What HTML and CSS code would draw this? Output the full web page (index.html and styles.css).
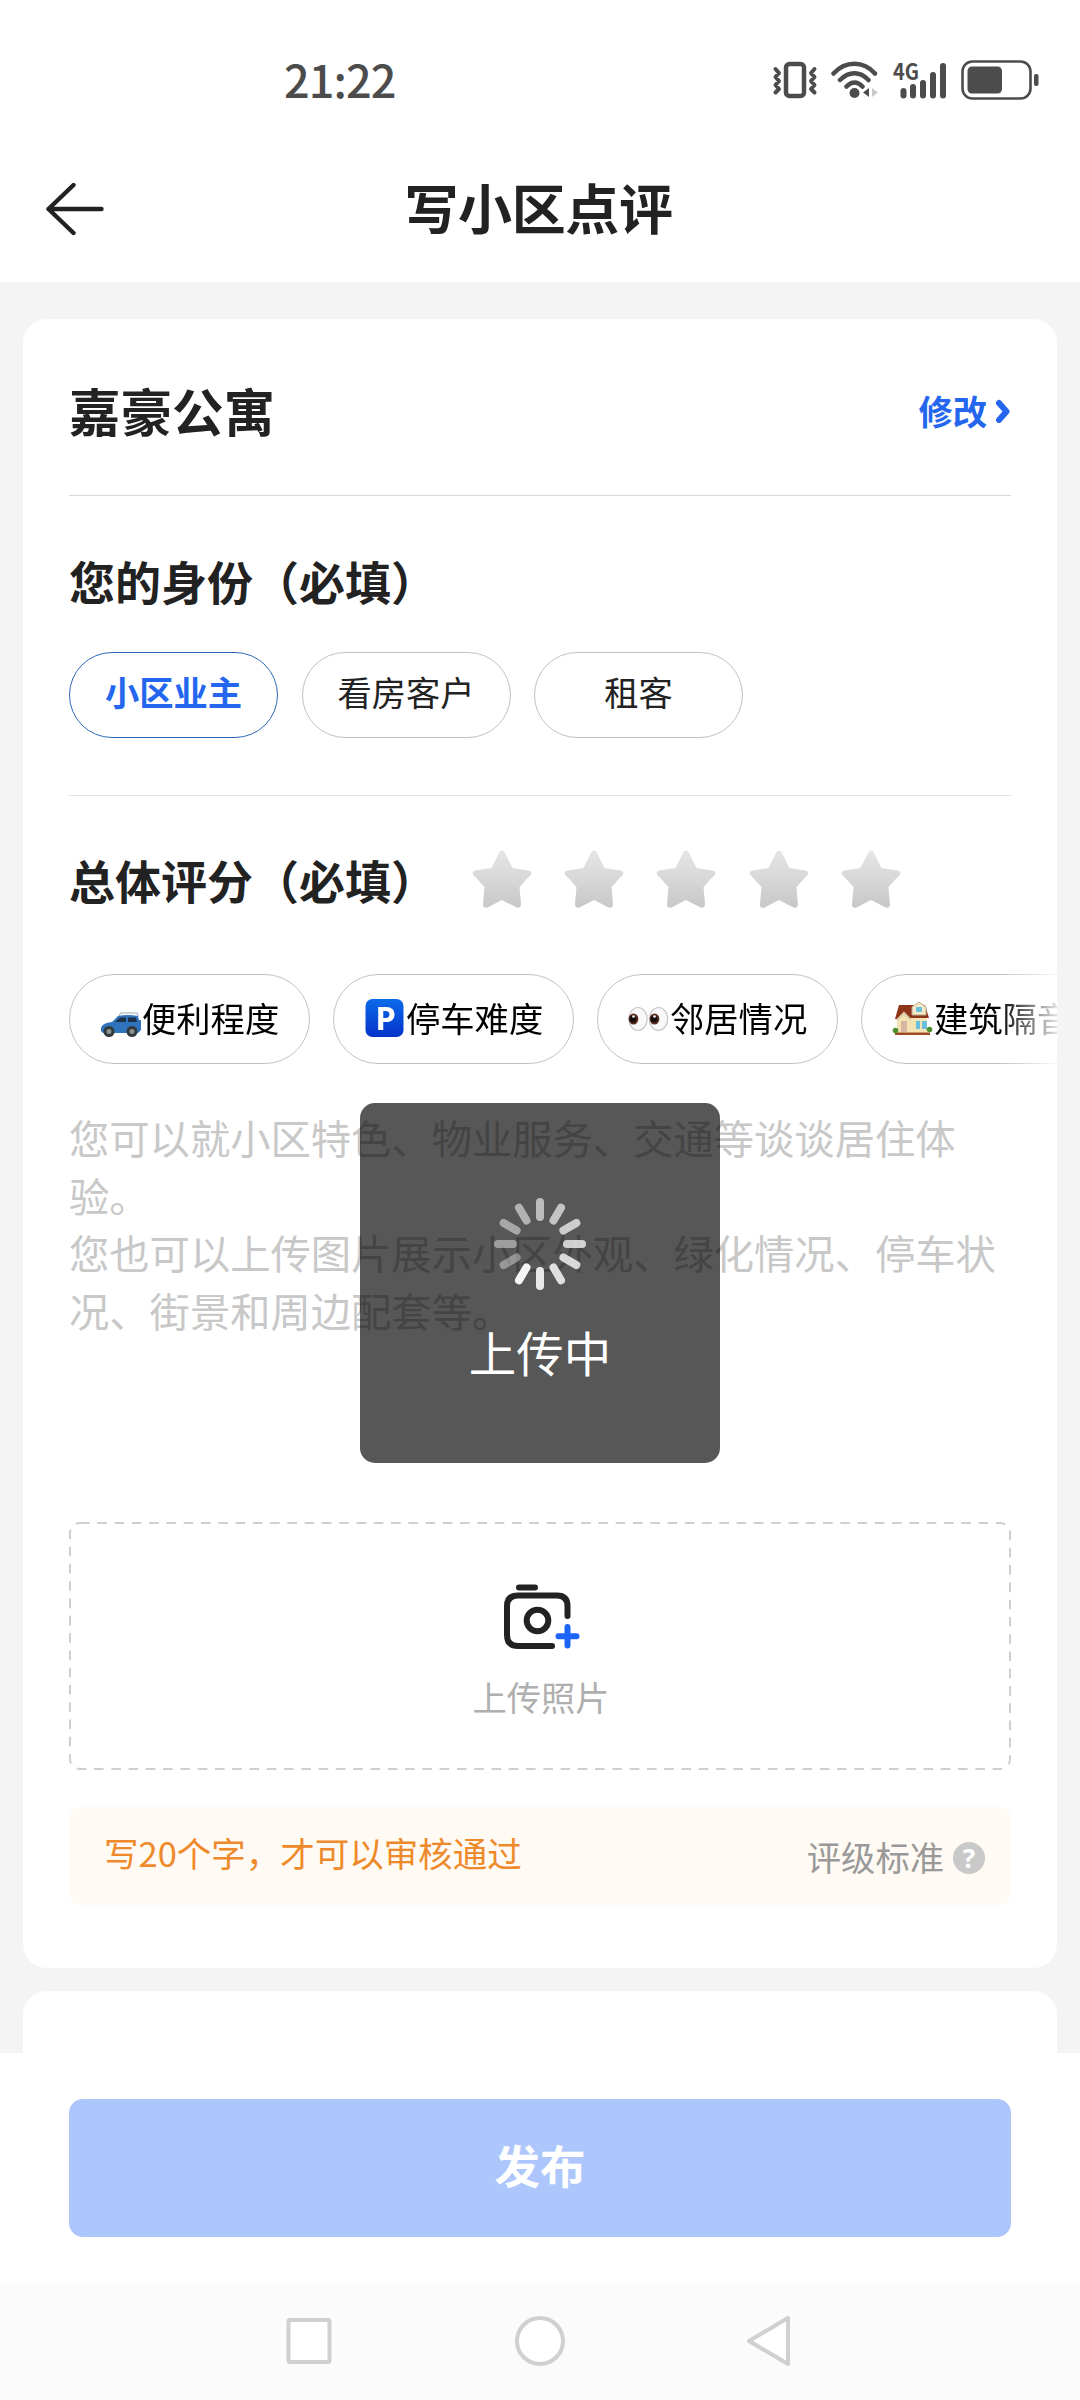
FILE: index.html
```html
<!DOCTYPE html>
<html lang="zh-CN">
<head>
<meta charset="utf-8">
<title>写小区点评</title>
<link rel="stylesheet" href="styles.css">
</head>
<body>
<div class="screen">
  <div class="status">
    <span class="time">21:22</span>
    <div class="status-icons">
      <svg class="vibrate" width="46" height="38" viewBox="0 0 46 38" fill="none" stroke="#4c4c4c" stroke-linecap="round" stroke-linejoin="round">
        <rect x="14" y="3" width="18" height="32" rx="3.500" stroke-width="4.500"/>
        <path d="M3.500 8l3.500 4-3.500 4 3.500 4-3.500 4 3.500 4-3.500 3.500M42.500 8l-3.500 4 3.500 4-3.500 4 3.500 4-3.500 4 3.500 3.500" stroke-width="4"/>
      </svg>
      <svg class="wifi" width="48" height="38" viewBox="0 0 48 38" fill="none" stroke="#4c4c4c" stroke-width="4.500" stroke-linecap="round">
        <path d="M2.500 12.500C14.500 -0.500 32.500 -0.500 44 12.500M9 19C18 10 29 10 37.500 19M15.500 25.500C20.500 20 26.500 20 31.500 25.500"/>
        <circle cx="23.500" cy="32" r="5" fill="#4c4c4c" stroke="none"/>
        <path d="M38 27v9l-6-4.500z" fill="#4c4c4c" stroke="none"/>
        <path d="M41 27v9l6-4.500z" fill="#c9c9c9" stroke="none"/>
      </svg>
      <svg class="signal" width="56" height="38" viewBox="0 0 56 38">
        <text x="1" y="18.500" class="net" textLength="26" lengthAdjust="spacingAndGlyphs">4G</text>
        <g stroke="#4c4c4c" stroke-width="6" stroke-linecap="round">
          <path d="M11.500 30v4.500M21 26v8.500M31 22v12.500M41 14v20.500M51 5v29.500"/>
        </g>
      </svg>
      <svg class="battery" width="79" height="40" viewBox="0 0 79 40">
        <rect x="1.500" y="1.500" width="68" height="37" rx="10" fill="none" stroke="#4c4c4c" stroke-width="2.600"/>
        <rect x="6.500" y="6.500" width="34.500" height="27" rx="4.500" fill="#4c4c4c"/>
        <rect x="73" y="14" width="4.500" height="12" rx="2" fill="#4c4c4c"/>
      </svg>
    </div>
  </div>

  <header class="header">
    <svg class="back" width="60" height="54" viewBox="0 0 60 54" fill="none" stroke="#222" stroke-width="4.400" stroke-linecap="round" stroke-linejoin="round">
      <path d="M29.500 3L4.500 27l25 24M4.500 27H57.500"/>
    </svg>
    <h1 class="title">写小区点评</h1>
  </header>

  <main class="content">
    <section class="card review">
      <div class="estate">
        <h2 class="estate-name">嘉豪公寓</h2>
        <a class="edit">修改
          <svg width="16" height="26" viewBox="0 0 16 26" fill="none" stroke="#2467ee" stroke-width="6" stroke-linecap="round" stroke-linejoin="round"><path d="M4 6l7.500 8.500-7.500 8.500"/></svg>
        </a>
      </div>

      <div class="identity">
        <h3 class="label">您的身份（必填）</h3>
        <div class="roles">
          <span class="role active">小区业主</span>
          <span class="role">看房客户</span>
          <span class="role">租客</span>
        </div>
      </div>

      <div class="rating">
        <h3 class="label">总体评分（必填）</h3>
        <div class="stars">
          <svg class="star" viewBox="0 0 60 58"><defs><linearGradient id="silver" x1="0" y1="0" x2="0" y2="1"><stop offset="0" stop-color="#e6e6e6"/><stop offset="1" stop-color="#c8c8c8"/></linearGradient><path id="star" d="M27.500 2Q30 -1 32.500 2L40.500 18L56.500 20.500Q61 22 58.500 25L47.500 37L49 54Q48.500 59 44.500 57.500L30 50L15.500 57.500Q11 59 11 54L12.500 37L1.500 25Q-1 22 3.500 20.500L19.500 18Z"/></defs><use href="#star" fill="url(#silver)"/></svg>
          <svg class="star" viewBox="0 0 60 58"><use href="#star" fill="url(#silver)"/></svg>
          <svg class="star" viewBox="0 0 60 58"><use href="#star" fill="url(#silver)"/></svg>
          <svg class="star" viewBox="0 0 60 58"><use href="#star" fill="url(#silver)"/></svg>
          <svg class="star" viewBox="0 0 60 58"><use href="#star" fill="url(#silver)"/></svg>
        </div>
      </div>

      <div class="topics">
        <span class="topic">
          <svg width="42" height="40" viewBox="0 0 42 40">
            <path d="M19 18l2-3h16l1 3" fill="none" stroke="#b9c4d2" stroke-width="1.500"/>
            <path d="M1 30q1-5 11-6l6-6q10-2 20 0l1 4h2v10l-3 3H3l-2-2z" fill="#2f73bd"/>
            <path d="M15 24l5-4.500h6V24zM28 19.500h8l1 4.500h-9z" fill="#1d3049"/>
            <circle cx="9" cy="33.500" r="5.500" fill="#333a3d"/><circle cx="9" cy="33.500" r="2.500" fill="#8b938d"/>
            <circle cx="32" cy="33.500" r="5.500" fill="#333a3d"/><circle cx="32" cy="33.500" r="2.500" fill="#8b938d"/>
          </svg>便利程度</span>
        <span class="topic">
          <svg width="42" height="40" viewBox="0 0 42 40">
            <defs><linearGradient id="park" x1="0" y1="0" x2="0" y2="1"><stop offset="0" stop-color="#0b6bea"/><stop offset="1" stop-color="#0532c8"/></linearGradient></defs>
            <rect x="1.500" y="1" width="38" height="38" rx="7" fill="url(#park)"/>
            <text x="21.500" y="32" class="park" text-anchor="middle">P</text>
          </svg>停车难度</span>
        <span class="topic">
          <svg width="42" height="40" viewBox="0 0 42 40">
            <g fill="#f8f8f8" stroke="#c6c6c8" stroke-width="1.200"><ellipse cx="10" cy="21" rx="9.200" ry="11.500"/><ellipse cx="30.500" cy="21" rx="9.200" ry="11.500"/></g>
            <ellipse cx="5.500" cy="21" rx="4.800" ry="5.500" fill="#54291b"/><ellipse cx="26.500" cy="21" rx="4.800" ry="5.500" fill="#54291b"/>
            <circle cx="5" cy="21" r="3.300" fill="#120c0a"/><circle cx="26" cy="21" r="3.300" fill="#120c0a"/>
            <circle cx="5.500" cy="18.500" r="1.300" fill="#fff"/><circle cx="26.500" cy="18.500" r="1.300" fill="#fff"/>
          </svg>邻居情况</span>
        <span class="topic">
          <svg width="42" height="40" viewBox="0 0 42 40">
            <path d="M5 20L11 11h24v25H5z" fill="#f3e3b5"/>
            <path d="M7 7h14l8 13H17l-5-6-7 7H3z" fill="#8e3519"/>
            <path d="M24 7h9l4 13H27l-8-9z" fill="#8e3519"/>
            <path d="M20 9l7-5 7 5v8H20z" fill="#f5eac8" stroke="#b9a88a"/>
            <path d="M5 22l7-7 7 7" fill="none" stroke="#d9cda9" stroke-width="2"/>
            <path d="M24 9h6v5h-6zM24 23h4v8h-4zM30 23h5v8h-5z" fill="#69bfdc"/>
            <path d="M9 23h6v11H9z" fill="#d7b7a4"/>
            <path d="M3 34.500h35V37H3z" fill="#9c4b24"/>
            <circle cx="3.500" cy="32.500" r="2.800" fill="#4c8f2f"/><circle cx="37.500" cy="31.500" r="2.800" fill="#4c8f2f"/>
          </svg>建筑隔音</span>
      </div>

      <div class="comment">
        <p>您可以就小区特色、物业服务、交通等谈谈居住体验。</p>
        <p>您也可以上传图片展示小区外观、绿化情况、停车状况、街景和周边配套等。</p>
      </div>

      <div class="upload">
        <svg class="dash" width="942" height="248" viewBox="0 0 942 248"><rect x="1" y="1" width="940" height="246" rx="10" fill="none" stroke="#cfcfcf" stroke-width="2" stroke-dasharray="9.600 7.680"/></svg>
        <svg class="camera" width="76" height="66" viewBox="0 0 76 66" fill="none" stroke="#222" stroke-width="6" stroke-linecap="round" stroke-linejoin="round">
          <path d="M15 3.500h16M63.500 32V22Q63.500 11.500 53 11.500H14Q3 11.500 3 22V51Q3 62 14 62H48"/>
          <circle cx="33.500" cy="36.500" r="10.800"/>
          <path d="M63.500 43v18.500M54.500 52.200h18" stroke="#1c64f8"/>
        </svg>
        <span class="upload-text">上传照片</span>
      </div>

      <div class="tip">
        <span class="tip-text">写20个字，才可以审核通过</span>
        <span class="standard">评级标准<i class="help">?</i></span>
      </div>
    </section>
    <section class="card next"></section>
  </main>

  <footer class="footer"><button class="publish">发布</button></footer>

  <nav class="nav">
    <svg width="52" height="52" viewBox="0 0 52 52"><rect x="5.500" y="5" width="41" height="42" rx="1.500"/></svg>
    <svg width="52" height="52" viewBox="0 0 52 52"><circle cx="26" cy="26" r="23"/></svg>
    <svg width="52" height="52" viewBox="0 0 52 52"><path d="M4 26L43 3v46z"/></svg>
  </nav>

  <div class="toast">
    <svg class="spinner" width="92" height="92" viewBox="-46 -46 92 92" stroke="#fff" stroke-width="8" stroke-linecap="round">
      <path d="M0-42V-27" opacity=".6"/>
      <path d="M0-42V-27" opacity=".65" transform="rotate(30)"/>
      <path d="M0-42V-27" opacity=".7" transform="rotate(60)"/>
      <path d="M0-42V-27" opacity=".74" transform="rotate(90)"/>
      <path d="M0-42V-27" opacity=".78" transform="rotate(120)"/>
      <path d="M0-42V-27" opacity=".82" transform="rotate(150)"/>
      <path d="M0-42V-27" opacity=".87" transform="rotate(180)"/>
      <path d="M0-42V-27" opacity=".94" transform="rotate(210)"/>
      <path d="M0-42V-27" opacity=".38" transform="rotate(240)"/>
      <path d="M0-42V-27" opacity=".42" transform="rotate(270)"/>
      <path d="M0-42V-27" opacity=".48" transform="rotate(300)"/>
      <path d="M0-42V-27" opacity=".54" transform="rotate(330)"/>
    </svg>
    <span class="toast-text">上传中</span>
  </div>
</div>
</body>
</html>
```
FILE: styles.css
```css
* { box-sizing: border-box; }
body { margin: 0; background: #fff; font-family: "Noto Sans CJK SC", sans-serif; color: #222; }
h1, h2, h3, p { margin: 0; }
svg { display: block; flex: none; }

.screen { position: relative; width: 1080px; height: 2400px; display: flex; flex-direction: column; overflow: hidden; background: #fff; }

.status { height: 160px; padding: 0 40px 0 284px; display: flex; justify-content: space-between; align-items: center; }
.time { font-size: 45px; line-height: 60px; font-weight: 500; color: #4c4c4c; letter-spacing: -0.9px; padding-bottom: 3px; }
.status-icons { display: flex; align-items: center; gap: 13px; }
.net { font-size: 22px; font-weight: 700; fill: #4c4c4c; }

.header { height: 122px; padding: 22px 44px 0; display: grid; grid-template-columns: 60px 1fr 60px; align-items: start; }
.title { margin: -2px 3px 0 0; font-size: 54px; line-height: 54px; font-weight: 700; text-align: center; letter-spacing: -0.4px; }

.content { height: 1771px; padding: 37px 23px 0; background: #f4f4f4; overflow: hidden; display: flex; flex-direction: column; gap: 23px; }
.card { background: #fff; flex: none; border-radius: 24px; }
.review { height: 1649px; padding: 0 46px; overflow: hidden; }
.next { height: 120px; }

.estate { height: 177px; display: flex; justify-content: space-between; align-items: center; padding-top: 5px; border-bottom: 1px solid #d8d8d8; }
.estate-name { font-size: 51.5px; line-height: 60px; font-weight: 700; }
.edit { display: flex; align-items: center; gap: 8px; font-size: 34.3px; line-height: 40px; font-weight: 700; color: #2467ee; }

.identity { height: 300px; padding-top: 54px; border-bottom: 1px solid #e4e4e4; }
.label { font-size: 46px; line-height: 60px; font-weight: 700; white-space: nowrap; }
.roles { display: flex; gap: 23.5px; margin-top: 42px; }
.role { width: 209px; height: 86px; padding-bottom: 8px; display: flex; align-items: center; justify-content: center; border: 1px solid #c2c2c2; border-radius: 43px; font-size: 34.3px; line-height: 40px; }
.role.active { border-color: #2c69bd; color: #2467ee; font-weight: 700; }

.rating { height: 178px; padding-top: 53px; display: flex; align-items: flex-start; }
.rating .label { width: 403px; }
.stars { display: flex; gap: 32.2px; padding-top: 1px; }
.star { width: 60px; height: 58px; }

.topics { display: flex; gap: 23px; margin-right: -46px; overflow: hidden; -webkit-mask-image: linear-gradient(90deg, #000 930px, transparent 995px); mask-image: linear-gradient(90deg, #000 930px, transparent 995px); }
.topic { flex: none; width: 241px; height: 90px; padding: 0 0 5px 30px; display: flex; align-items: center; border: 1px solid #c2c2c2; border-radius: 45px; font-size: 34.3px; line-height: 40px; color: #000; white-space: nowrap; }
.topic svg { position: relative; top: 1px; }
.park { font-size: 33px; font-weight: 700; fill: #fff; font-family: "Open Sans", sans-serif; }

.comment { height: 458px; padding-top: 44px; font-size: 40.3px; line-height: 57.5px; color: #c8c8c8; }

.upload { position: relative; height: 248px; padding-top: 62px; display: flex; flex-direction: column; align-items: center; }
.dash { position: absolute; left: 0; top: 0; }
.camera { margin-left: 4px; }
.upload-text { margin: 26px 0 0 2px; font-size: 34.3px; line-height: 40px; color: #afafaf; }

.tip { height: 98px; margin-top: 37px; padding: 0 26px 0 35px; display: flex; align-items: center; justify-content: space-between; border-radius: 12px; background: #fffaf3; font-size: 34.3px; line-height: 40px; }
.tip-text { color: #ee8a2b; padding-bottom: 8px; font-size: 34.5px; }
.standard { display: flex; align-items: center; gap: 9px; color: #999; }
.help { width: 32px; height: 32px; margin-top: 4px; border-radius: 50%; background: #c9c9c9; color: #fff; font: 700 26px/32px "Open Sans", sans-serif; text-align: center; }

.footer { height: 230px; padding: 46px 69px; background: #fff; }
.publish { width: 942px; height: 138px; padding: 0 0 8px; border: 0; border-radius: 14px; background: #adc6fb; color: #fff; font: 700 45.5px/60px "Noto Sans CJK SC", sans-serif; }

.nav { height: 117px; padding: 32px 283px 0; display: flex; justify-content: space-between; background: #fbfbfb; }
.nav svg { fill: #fff; stroke: #d0d0d0; stroke-width: 4; stroke-linejoin: round; }

.toast { position: absolute; left: 360px; top: 1103px; width: 360px; height: 360px; padding-top: 95px; display: flex; flex-direction: column; align-items: center; border-radius: 15px; background: rgba(0, 0, 0, 0.66); }
.toast-text { margin-top: 32px; font-size: 47.5px; line-height: 60px; color: #fff; }
```
